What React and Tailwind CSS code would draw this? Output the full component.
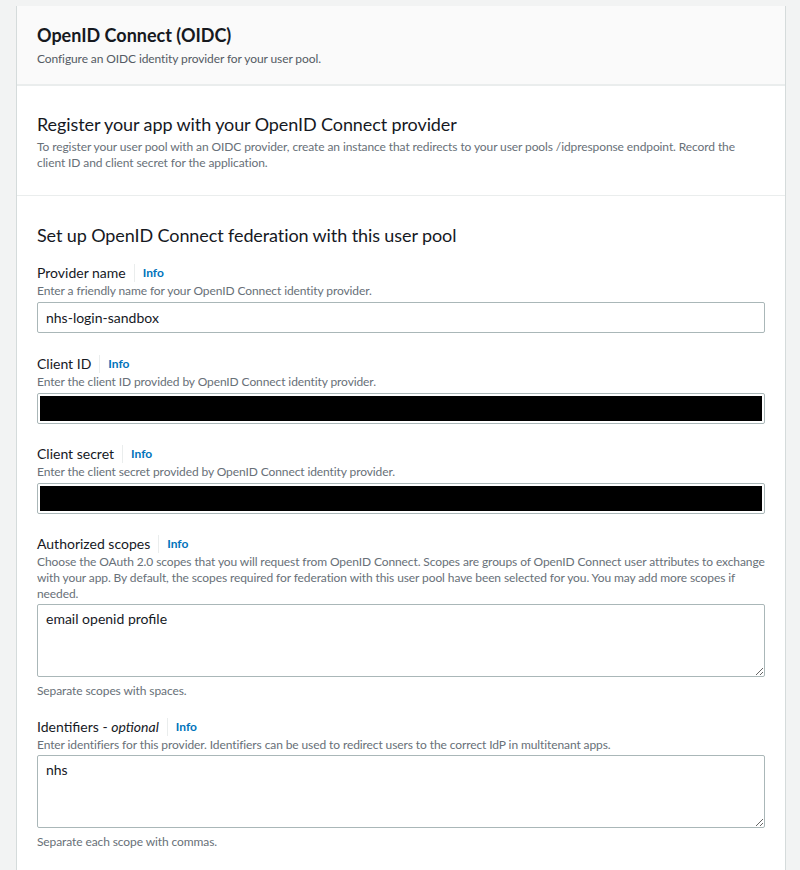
import React from "react";

const font = { fontFamily: "Lato, 'Liberation Sans', sans-serif" };

function Label({ children, optional }) {
  return (
    <div className="flex items-center h-[20px]">
      <span className="text-[14px] leading-[20px] text-[#16191f]">
        {children}
        {optional && (
          <>
            {" - "}
            <i>optional</i>
          </>
        )}
      </span>
      <span className="mx-[8px] h-[18px] w-px bg-[#eaeded]" />
      <a className="text-[12px] font-bold text-[#0073bb] leading-[20px]">Info</a>
    </div>
  );
}

function Desc({ children, className = "" }) {
  return (
    <p className={"text-[12px] leading-[16px] tracking-[-0.1px] text-[#687078] " + className}>{children}</p>
  );
}

function TextInput({ value }) {
  return (
    <div className="mt-[3px] h-[31px] border border-[#aab7b8] rounded-[2px] bg-white px-[8px] flex items-center text-[14px] text-[#16191f]">
      {value}
    </div>
  );
}

function Redacted({ className = "" }) {
  return (
    <div className={"h-[31px] border border-[#aab7b8] rounded-[2px] bg-white p-[2px] " + className}>
      <div className="h-full bg-black" />
    </div>
  );
}

function Area({ value }) {
  return (
    <textarea
      readOnly
      defaultValue={value}
      className="block w-full mt-[2px] h-[73px] border border-[#aab7b8] rounded-[2px] bg-white px-[8px] py-[4px] text-[14px] leading-[20px] text-[#16191f] outline-none"
      style={{ ...font, resize: "vertical" }}
    />
  );
}

export default function App() {
  return (
    <div className="min-h-[870px] bg-[#f2f3f3] pt-[6px] pl-[16px] pr-[14px]" style={font}>
      <div className="w-[770px] bg-white border-x border-[#d5dbdb] min-h-[864px]">
        <div className="bg-[#fafafa] h-[80px] border-b-2 border-[#eaeded] px-[20px] pt-[17px]">
          <h1 className="text-[18px] font-bold leading-[24px] text-[#16191f]">OpenID Connect (OIDC)</h1>
          <p className="text-[12px] leading-[16px] tracking-[-0.1px] text-[#545b64] mt-[4px]">
            Configure an OIDC identity provider for your user pool.
          </p>
        </div>
        <div className="px-[20px] pt-[27px] pb-[24px] border-b border-[#eaeded]">
          <h2 className="text-[18px] leading-[22px] tracking-[-0.1px] text-[#16191f]">
            Register your app with your OpenID Connect provider
          </h2>
          <Desc className="mt-[4px] text-[#545b64]">
            To register your user pool with an OIDC provider, create an instance that redirects to your user pools /idpresponse endpoint. Record the client ID and client secret for the application.
          </Desc>
        </div>
        <div className="px-[20px] pt-[28px] pb-[30px]">
          <h2 className="text-[18px] leading-[22px] tracking-[-0.1px] text-[#16191f]">
            Set up OpenID Connect federation with this user pool
          </h2>

          <div className="mt-[17px]">
            <Label>Provider name</Label>
            <Desc>Enter a friendly name for your OpenID Connect identity provider.</Desc>
            <TextInput value="nhs-login-sandbox" />
          </div>

          <div className="mt-[21px]">
            <Label>Client ID</Label>
            <Desc>Enter the client ID provided by OpenID Connect identity provider.</Desc>
            <Redacted className="mt-[3px]" />
          </div>

          <div className="mt-[20px]">
            <Label>Client secret</Label>
            <Desc>Enter the client secret provided by OpenID Connect identity provider.</Desc>
            <Redacted className="mt-[3px]" />
          </div>

          <div className="mt-[20px]">
            <Label>Authorized scopes</Label>
            <Desc>
              Choose the OAuth 2.0 scopes that you will request from OpenID Connect. Scopes are groups of OpenID Connect user attributes to exchange with your app. By default, the scopes required for federation with this user pool have been selected for you. You may add more scopes if needed.
            </Desc>
            <Area value="email openid profile" />
            <Desc className="mt-[6px]">Separate scopes with spaces.</Desc>
          </div>

          <div className="mt-[18px]">
            <Label optional>Identifiers</Label>
            <Desc>
              Enter identifiers for this provider. Identifiers can be used to redirect users to the correct IdP in multitenant apps.
            </Desc>
            <Area value="nhs" />
            <Desc className="mt-[6px]">Separate each scope with commas.</Desc>
          </div>
        </div>
      </div>
    </div>
  );
}
